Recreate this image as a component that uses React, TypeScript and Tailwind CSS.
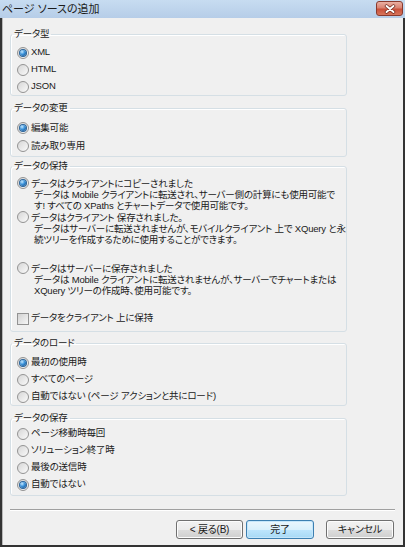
import React from "react";

interface RadioDotProps {
  checked?: boolean;
}

const RadioDot = ({ checked }: RadioDotProps) => (
  <span className="flex h-[12px] w-[12px] shrink-0 items-center justify-center rounded-full border border-[#939393] bg-[linear-gradient(135deg,#d6d6d6,#fafafa)]">
    {checked && (
      <span className="h-[6px] w-[6px] rounded-full bg-[radial-gradient(circle_at_35%_30%,#c4e8ff_0%,#3a92da_45%,#0c437f_100%)] shadow-[0_0_0_1px_#2a649a]" />
    )}
  </span>
);

interface RadioProps {
  label: string;
  checked?: boolean;
  rowClass?: string;
}

const Radio = ({ label, checked, rowClass = "h-[17px]" }: RadioProps) => (
  <div className={`flex items-center gap-[2px] whitespace-nowrap ${rowClass}`}>
    <RadioDot checked={checked} />
    <span>{label}</span>
  </div>
);

interface MultiRadioProps {
  lines: string[];
  checked?: boolean;
  className?: string;
}

const MultiRadio = ({ lines, checked, className = "" }: MultiRadioProps) => (
  <div className={`flex items-start gap-[2px] leading-[11px] ${className}`}>
    <span className="-mt-[1px]">
      <RadioDot checked={checked} />
    </span>
    <div className="whitespace-nowrap">
      <div>{lines[0]}</div>
      {lines.slice(1).map((l) => (
        <div key={l} className="pl-[3px]">
          {l}
        </div>
      ))}
    </div>
  </div>
);

interface GroupProps {
  title: string;
  className?: string;
  children: React.ReactNode;
}

const Group = ({ title, className = "", children }: GroupProps) => (
  <fieldset
    className={`w-[337px] rounded-[3px] border border-[#d5dfe5] shadow-[inset_1px_1px_0_#ffffff] px-0 ${className}`}
  >
    <legend className="ml-[1px] px-[2px] leading-[12px]">{title}</legend>
    {children}
  </fieldset>
);

interface ButtonProps {
  label: string;
  primary?: boolean;
  className?: string;
}

const WinButton = ({ label, primary, className = "" }: ButtonProps) => (
  <button
    className={`flex h-[19px] items-center justify-center rounded-[3px] border text-[10px] leading-none text-[#1a1a1a] ${
      primary
        ? "border-[#3c7fb1] bg-[linear-gradient(#eaf6fd_0%,#d9f0fc_50%,#bee6fd_51%,#a7d9f5_100%)] shadow-[inset_0_0_0_1px_#c5e6fa]"
        : "border-[#707070] bg-[linear-gradient(#f2f2f2_0%,#ebebeb_50%,#dddddd_51%,#cfcfcf_100%)] shadow-[inset_0_0_0_1px_#fcfcfc]"
    } ${className}`}
  >
    {label}
  </button>
);

export default function App() {
  return (
    <div className="flex h-[547px] w-[405px] flex-col bg-[#f0f0f0] font-['Liberation_Sans','Noto_Sans_CJK_JP',sans-serif] text-[9.5px] tracking-[-0.2px] text-[#1a1a1a] [font-feature-settings:'palt']">
      {/* title bar */}
      <div className="flex h-[18px] shrink-0 items-start justify-between bg-[linear-gradient(#c7dcf1,#b6cde8)] pr-[2px]">
        <span className="pl-[2px] pt-[1px] text-[11px] leading-[16px] tracking-normal text-[#1b1b1b]">
          ページ ソースの追加
        </span>
        <span className="mt-[1px] flex h-[15px] w-[27px] items-center justify-center rounded-[3px] border border-[#8a3a2e] bg-[linear-gradient(#eab0a3_0%,#d98372_45%,#c9503a_55%,#d8765c_100%)]">
          <svg width="12" height="10" viewBox="0 0 12 10">
            <path
              d="M2.5 2 L9.5 8 M9.5 2 L2.5 8"
              stroke="#6a2418"
              strokeWidth="3.4"
              strokeLinecap="round"
            />
            <path
              d="M2.5 2 L9.5 8 M9.5 2 L2.5 8"
              stroke="#ffffff"
              strokeWidth="2"
              strokeLinecap="round"
            />
          </svg>
        </span>
      </div>

      {/* body */}
      <div className="flex flex-1 flex-col border-b-2 border-l-2 border-r-2 border-[#333] px-[8px] pt-[10px] shadow-[inset_1px_0_0_#b8b8b8]">
        <Group title="データ型">
          <div className="pl-[6px] pt-[4px]">
            <Radio label="XML" checked />
            <Radio label="HTML" />
            <Radio label="JSON" />
          </div>
        </Group>

        <Group title="データの変更" className="mt-[6px]">
          <div className="pb-[1px] pl-[6px] pt-[5px]">
            <Radio label="編集可能" checked rowClass="h-[18px]" />
            <Radio label="読み取り専用" rowClass="h-[18px]" />
          </div>
        </Group>

        <Group title="データの保持" className="mt-[3px]">
          <div className="pb-[4px] pl-[6px] pt-[6px]">
            <MultiRadio
              checked
              lines={[
                "データはクライアントにコピーされました",
                "データは Mobile クライアントに転送され、サーバー側の計算にも使用可能で",
                "す! すべての XPaths とチャートデータで使用可能です。",
              ]}
            />
            <MultiRadio
              className="mt-[1px]"
              lines={[
                "データはクライアント 保存されました。",
                "データはサーバーに転送されませんが、モバイルクライアント 上で XQuery と永",
                "続ツリーを作成するために使用することができます。",
              ]}
            />
            <MultiRadio
              className="mt-[18px]"
              lines={[
                "データはサーバーに保存されました",
                "データは Mobile クライアントに転送されませんが、サーバーでチャートまたは",
                "XQuery ツリーの作成時、使用可能です。",
              ]}
            />
            <div className="mt-[14px] flex h-[17px] items-center gap-[2px]">
              <span className="h-[12px] w-[12px] shrink-0 border border-[#939393] bg-[linear-gradient(135deg,#d2d2d2,#f7f7f7)]" />
              <span>データをクライアント 上に保持</span>
            </div>
          </div>
        </Group>

        <Group title="データのロード" className="mt-[5px]">
          <div className="pl-[6px] pt-[5px]">
            <Radio label="最初の使用時" checked />
            <Radio label="すべてのページ" />
            <Radio label="自動ではない (ページ アクションと共にロード)" />
          </div>
        </Group>

        <Group title="データの保存" className="mt-[6px]">
          <div className="pb-[2px] pl-[6px] pt-[1px]">
            <Radio label="ページ移動時毎回" />
            <Radio label="ソリューション終了時" />
            <Radio label="最後の送信時" />
            <Radio label="自動ではない" checked />
          </div>
        </Group>

        <div className="mt-[13px] h-[2px] border-t border-b border-t-[#a0a0a0] border-b-[#ffffff]" />

        <div className="mt-[9px] flex justify-end pr-[1px]">
          <WinButton label="< 戻る(B)" className="w-[67px]" />
          <WinButton label="完了" primary className="ml-[3px] w-[68px]" />
          <WinButton label="キャンセル" className="ml-[12px] w-[68px]" />
        </div>
      </div>
    </div>
  );
}
